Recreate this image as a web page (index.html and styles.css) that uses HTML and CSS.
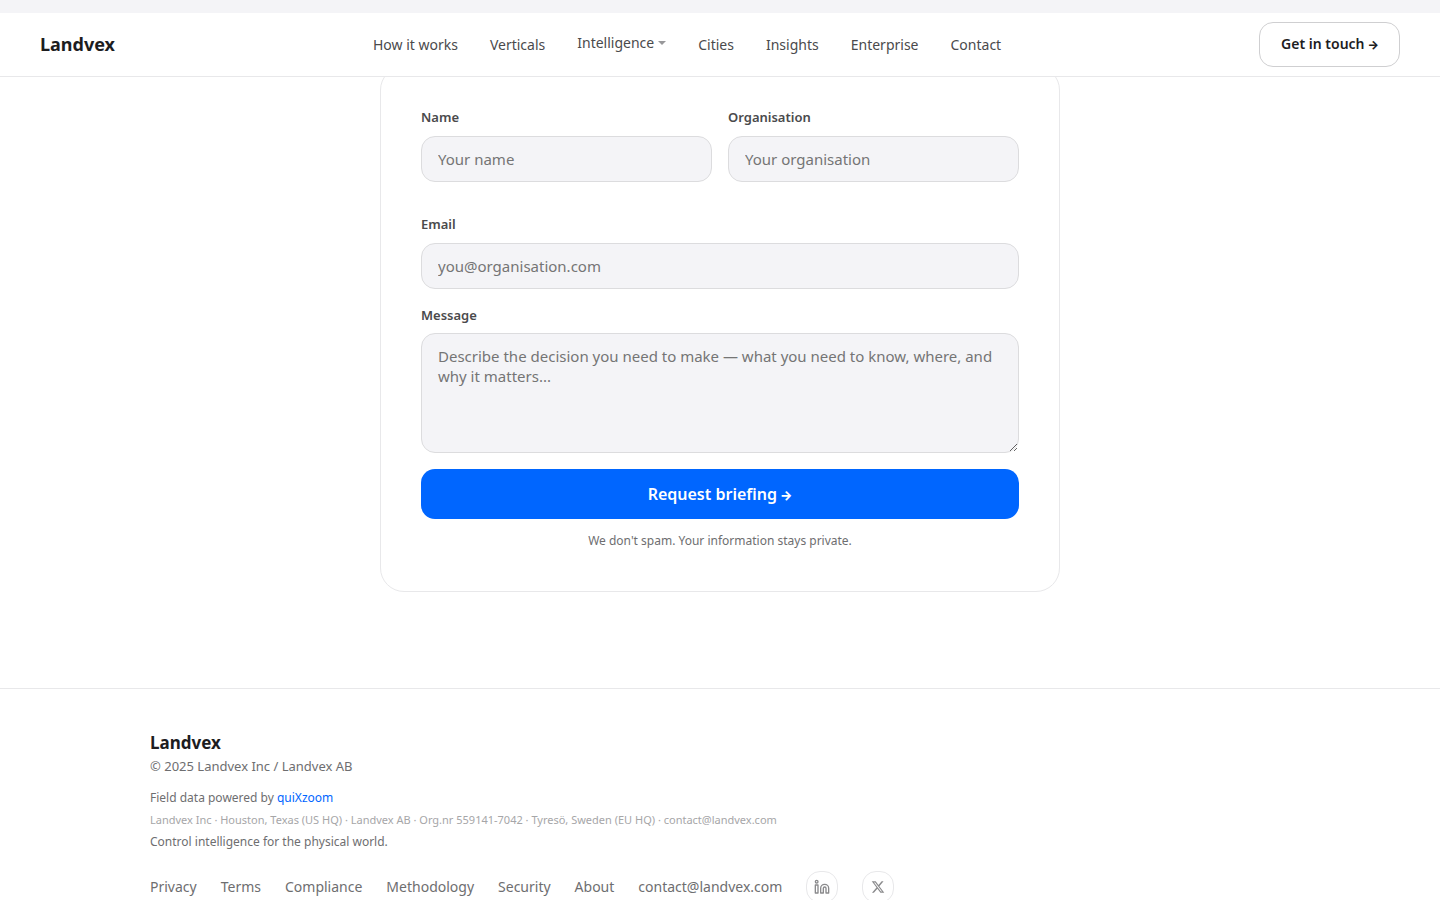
FILE: index.html
```html
<!DOCTYPE html>
<html lang="en">
<head>
<meta charset="utf-8">
<meta name="viewport" content="width=device-width, initial-scale=1">
<title>Landvex</title>
<link rel="stylesheet" href="styles.css">
</head>
<body>
<div class="strip"></div>
<header class="header">
  <a class="logo" href="#">Landvex</a>
  <nav class="nav">
    <a href="#">How it works</a>
    <a href="#">Verticals</a>
    <button class="nav-menu" type="button">Intelligence<span class="caret"></span></button>
    <a href="#">Cities</a>
    <a href="#">Insights</a>
    <a href="#">Enterprise</a>
    <a href="#">Contact</a>
  </nav>
  <a class="cta" href="#">Get in touch <span class="arrow">→</span></a>
</header>
<main class="main">
  <form class="card">
    <div class="row">
      <div class="field">
        <label for="name">Name</label>
        <input id="name" type="text" placeholder="Your name">
      </div>
      <div class="field">
        <label for="org">Organisation</label>
        <input id="org" type="text" placeholder="Your organisation">
      </div>
    </div>
    <div class="field">
      <label for="email">Email</label>
      <input id="email" type="email" placeholder="you@organisation.com">
    </div>
    <div class="field field-message">
      <label for="message">Message</label>
      <textarea id="message" placeholder="Describe the decision you need to make — what you need to know, where, and why it matters..."></textarea>
    </div>
    <button class="submit" type="submit">Request briefing <span class="arrow">→</span></button>
    <p class="note">We don't spam. Your information stays private.</p>
  </form>
</main>
<footer class="footer">
  <div class="footer-inner">
    <div class="footer-logo">Landvex</div>
    <p class="copyright">© 2025 Landvex Inc / Landvex AB</p>
    <p class="small">Field data powered by <a class="accent" href="#">quiXzoom</a></p>
    <p class="legal">Landvex Inc · Houston, Texas (US HQ) · Landvex AB · Org.nr 559141-7042 · Tyresö, Sweden (EU HQ) · contact@landvex.com</p>
    <p class="small">Control intelligence for the physical world.</p>
    <nav class="footer-nav">
      <a href="#">Privacy</a>
      <a href="#">Terms</a>
      <a href="#">Compliance</a>
      <a href="#">Methodology</a>
      <a href="#">Security</a>
      <a href="#">About</a>
      <a href="#">contact@landvex.com</a>
      <a class="social" href="#" aria-label="LinkedIn">
        <svg width="16" height="16" viewBox="0 0 24 24" fill="none" stroke="currentColor" stroke-width="2" stroke-linejoin="round"><path d="M16 8a6 6 0 0 1 6 6v7h-4v-7a2 2 0 0 0-4 0v7h-4v-7a6 6 0 0 1 6-6z"/><path d="M2 9h4v12H2z"/><circle cx="4" cy="4" r="2"/></svg>
      </a>
      <a class="social" href="#" aria-label="X">
        <svg width="14" height="14" viewBox="0 0 24 24" fill="currentColor"><path d="M18.244 2.25h3.308l-7.227 8.26 8.502 11.24H16.17l-5.214-6.817L4.99 21.75H1.68l7.73-8.835L1.254 2.25H8.08l4.713 6.231zm-1.161 17.52h1.833L7.084 4.126H5.117z"/></svg>
      </a>
    </nav>
  </div>
</footer>
</body>
</html>
```
FILE: styles.css
```css
* { box-sizing: border-box; }
body {
  margin: 0;
  background: #ffffff;
  color: #1d1d1f;
  font-family: "Noto Sans", sans-serif;
  font-size: 14px;
  line-height: 20px;
}
a { color: inherit; text-decoration: none; }
p { margin: 0; }
button, input, textarea { font-family: inherit; }
.strip { height: 13px; background: #f4f4f7; }
.header {
  position: relative;
  z-index: 10;
  display: flex;
  align-items: center;
  justify-content: space-between;
  height: 64px;
  padding: 0 40px;
  background: #ffffff;
  border-bottom: 1px solid #e8e8ea;
}
.logo { font-size: 18px; font-weight: 700; line-height: 27px; }
.nav { display: flex; gap: 32px; color: #4a4a4c; }
.nav-menu {
  display: flex;
  align-items: center;
  gap: 4px;
  padding: 0 0 4px;
  border: 0;
  background: none;
  color: inherit;
  font-size: 14px;
  line-height: 16px;
}
.caret {
  border: 4px solid transparent;
  border-top-color: #98989a;
  border-bottom: 0;
}
.cta {
  display: flex;
  align-items: baseline;
  gap: 3px;
  padding: 10px 20px 12px 21px;
  border: 1px solid #cfcfd1;
  border-radius: 14px;
  font-weight: 600;
  line-height: 21px;
}
.arrow {
  font-family: Inter, sans-serif;
  font-size: 12px;
  font-weight: 800;
  line-height: 1;
}
.main { padding: 0 20px 96px; }
.card {
  display: flex;
  flex-direction: column;
  gap: 16px;
  max-width: 680px;
  margin: -11px auto 0;
  padding: 40px;
  border: 1px solid #e8e8ea;
  border-radius: 24px;
  background: #ffffff;
}
.row {
  display: grid;
  grid-template-columns: 1fr 1fr;
  gap: 16px;
  margin-bottom: 16px;
}
.field { display: flex; flex-direction: column; gap: 8px; }
.field-message { gap: 7px; }
.field label { color: #4a4a4c; font-size: 13px; font-weight: 600; line-height: 21px; }
.field input, .field textarea {
  width: 100%;
  padding: 12px 16px;
  border: 1px solid #dcdcde;
  border-radius: 14px;
  background: #f4f4f7;
  font-size: 15px;
}
.field input { height: 46px; }
.field textarea { height: 120px; resize: vertical; }
.submit {
  display: flex;
  align-items: baseline;
  justify-content: center;
  gap: 3px;
  padding: 14px 16px;
  border: 0;
  border-radius: 14px;
  background: #0066ff;
  color: #fff;
  font-size: 16px;
  font-weight: 600;
  line-height: 22px;
}
.submit .arrow { font-size: 13px; }
.note { margin-top: -4px; text-align: center; color: #6e6e70; font-size: 12px; }
.footer { border-top: 1px solid #e8e8ea; }
.footer-inner { max-width: 1180px; margin: 0 auto; padding: 40px 20px; }
.footer-logo { font-size: 17px; font-weight: 700; line-height: 27px; }
.copyright { color: #6e6e70; font-size: 13px; margin-bottom: 11px; }
.small { color: #6e6e70; font-size: 12px; line-height: 22px; }
.accent { color: #0066ff; }
.legal { color: #a6a6a8; font-size: 11px; line-height: 22px; }
.footer-nav {
  display: flex;
  flex-wrap: wrap;
  align-items: center;
  gap: 24px;
  margin-top: 18px;
  color: #6e6e70;
}
.social {
  display: flex;
  align-items: center;
  justify-content: center;
  width: 32px;
  height: 32px;
  border: 1px solid #e8e8ea;
  border-radius: 14px;
  color: #8a8a8c;
}
```
